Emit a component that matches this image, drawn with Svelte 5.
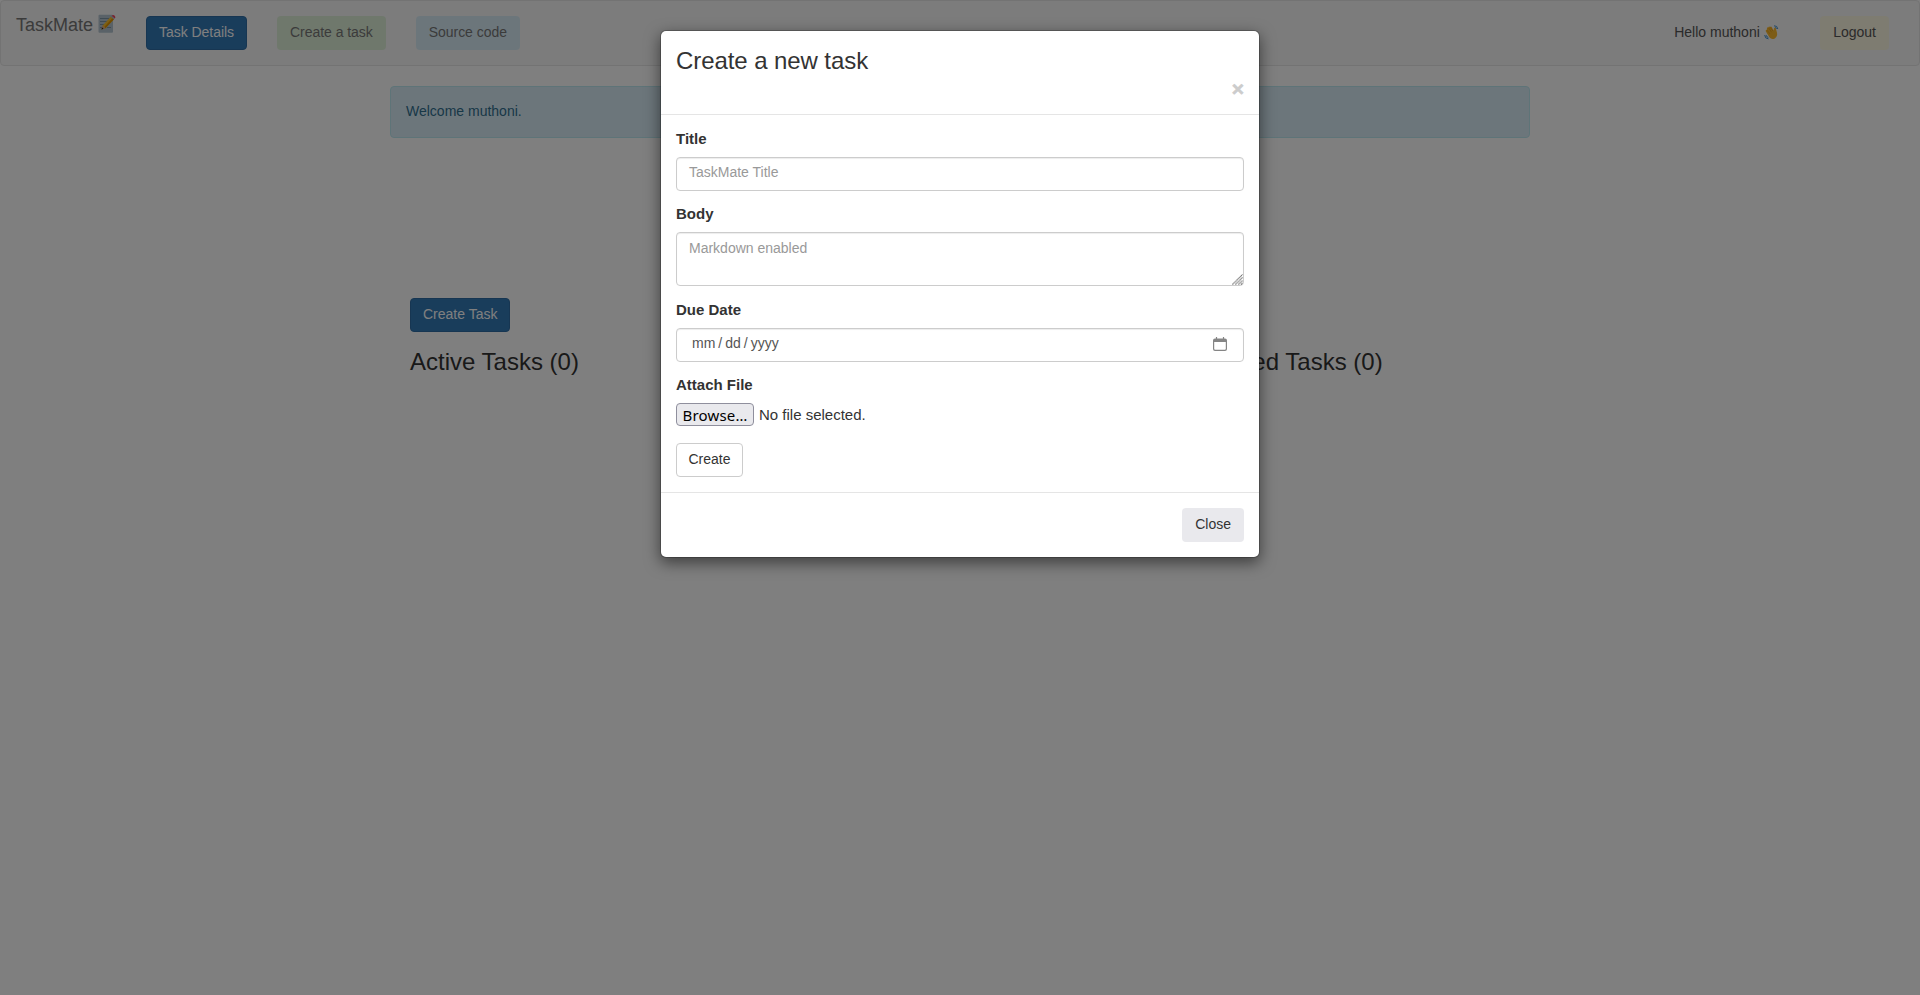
<script>
  const links = [
    { label: 'Task Details', kind: 'primary' },
    { label: 'Create a task', kind: 'success' },
    { label: 'Source code', kind: 'info' }
  ];
</script>

<div class="page">
  <nav>
    <span class="brand">
      TaskMate
      <svg width="19" height="19" viewBox="0 0 19 19">
        <rect x="0.500" y="0.800" width="14.500" height="18" rx="1" fill="#b4c5d0" />
        <path d="M2 4.500h9M2 7.500h8M2 10.500h6M2 13.500h4M9 13.500h4" stroke="#7f96a6" stroke-width="1" />
        <path d="M3.500 15.500l1.200-4L13 2.500l3 2.700-8.500 9z" fill="#fbc02d" />
        <path d="M6.500 12.800l8-8.700 1.500 1.100-8.500 9z" fill="#e59600" />
        <path d="M3.500 15.500l1.200-4 2.800 2.700z" fill="#e0a98a" />
        <path d="M3.500 15.500l.6-2 1.400 1.300z" fill="#222" />
        <path d="M12.700 2.800l1-1.100 3 2.700-1 1.100z" fill="#b0bec5" />
        <path d="M13.700 1.700q1.500-1.500 3 0t0 2.700z" fill="#f2475f" />
      </svg>
    </span>
    <div class="links">
      {#each links as link}
        <button class="btn nav-btn {link.kind}">{link.label}</button>
      {/each}
    </div>
    <span class="hello">
      Hello muthoni
      <svg width="15" height="15" viewBox="0 0 15 15">
        <path d="M1.800 6.200q-.4-1.300.9-1.200L3 3.200q.2-1.200 1.300-.7Q5 1 6 1.900q1.200-.8 1.700.2l1.800 3.300.6-2.200q.8-1.300 1.700 0l1.200 4.600q.8 3.800-2.200 5.600-3 1.500-5.300-.8z" fill="#fbb92c" />
        <path d="M3 5.200l3 3.700M4.600 2.900l3 4.400M6.400 2.500l2.500 3.600" stroke="#dc9218" stroke-width=".6" fill="none" />
        <path d="M10 .8q3.400-.3 3.800 3.200M11.300 2.500q1 .2 1.200 1.200M.7 10q.1 3.600 3.800 3.900M2.300 10.300q.2 1.900 2 2.100" stroke="#4291d0" stroke-width="1" fill="none" />
      </svg>
    </span>
    <button class="btn nav-btn warning">Logout</button>
  </nav>
  <div class="alert">Welcome muthoni.</div>
  <main>
    <section>
      <button class="btn primary create-task">Create Task</button>
      <h3>Active Tasks (0)</h3>
    </section>
    <section class="completed">
      <h3>Completed Tasks (0)</h3>
    </section>
  </main>
</div>

<div class="backdrop">
  <div class="modal">
    <header>
      <h3>Create a new task</h3>
      <button class="dismiss" aria-label="Dismiss">×</button>
    </header>
    <form>
      <span class="label">Title</span>
      <div class="field">TaskMate Title</div>
      <span class="label">Body</span>
      <div class="field area">
        Markdown enabled
        <svg class="grip" width="11" height="11" viewBox="0 0 11 11" stroke="#666" stroke-width="1.1" stroke-dasharray="1.1 .4">
          <path d="M.5 10.500l10-10M3.500 10.500l7-7M6.500 10.500l4-4M9 10.500l1.500-1.500" fill="none" />
        </svg>
      </div>
      <span class="label">Due Date</span>
      <div class="field date">
        <span class="parts"><span>mm</span><span>/</span><span>dd</span><span>/</span><span>yyyy</span></span>
        <svg width="14" height="14" viewBox="0 0 14 14">
          <path d="M2 1.500h10a2 2 0 0 1 2 2V12a2 2 0 0 1-2 2H2a2 2 0 0 1-2-2V3.500a2 2 0 0 1 2-2zM1.200 5v6.800q0 1 1 1h9.600q1 0 1-1V5z" fill="#858585" fill-rule="evenodd" />
          <path d="M3.500 0v3M10.500 0v3" stroke="#858585" stroke-width="1.200" />
        </svg>
      </div>
      <span class="label">Attach File</span>
      <div class="file"><span class="browse">Browse…</span><span>No file selected.</span></div>
      <button type="button" class="btn plain">Create</button>
    </form>
    <footer><button class="btn close">Close</button></footer>
  </div>
</div>

<style>
  :global(body) {
    margin: 0;
    background: #fff;
  }
  .page,
  .backdrop {
    box-sizing: border-box;
    width: 100%;
    height: 995px;
    overflow: hidden;
    font: 14px/20px 'Liberation Sans', Arial, sans-serif;
    color: #333;
  }
  .backdrop {
    position: absolute;
    inset: 0;
    padding-top: 30px;
    background: rgba(0, 0, 0, 0.5);
  }
  nav {
    box-sizing: border-box;
    display: flex;
    align-items: flex-start;
    height: 66px;
    padding: 15px 30px 0 15px;
    border: 1px solid #e7e7e7;
    border-radius: 4px;
    background: #f8f8f8;
  }
  .brand {
    display: flex;
    gap: 5px;
    width: 130px;
    margin-top: -1px;
    font-size: 18px;
    line-height: 20px;
    color: #777;
    white-space: nowrap;
  }
  .brand svg {
    margin-top: -1px;
  }
  .links {
    display: flex;
    gap: 30px;
    letter-spacing: -0.04px;
  }
  .hello {
    display: flex;
    gap: 4px;
    width: 146px;
    margin-left: auto;
    padding-top: 6px;
    color: #555;
    white-space: nowrap;
  }
  .hello svg {
    margin-top: 3px;
  }
  .btn {
    box-sizing: border-box;
    display: flex;
    align-items: center;
    height: 34px;
    padding: 0 12px 3px;
    border: 1px solid transparent;
    border-radius: 4px;
    font: inherit;
    letter-spacing: inherit;
    white-space: nowrap;
  }
  .nav-btn {
    padding-bottom: 2px;
  }
  .primary {
    background: #337ab7;
    border-color: #2e6da4;
    color: #fff;
  }
  .success {
    background: #dff0d8;
    color: #777;
  }
  .info {
    background: #d9edf7;
    color: #777;
  }
  .warning {
    background: #fcf8e3;
    color: #555;
  }
  .alert {
    box-sizing: border-box;
    width: 1140px;
    height: 52px;
    margin: 20px auto 0;
    padding: 14px 15px;
    border: 1px solid #bce8f1;
    border-radius: 4px;
    background: #d9edf7;
    color: #31708f;
  }
  main {
    display: grid;
    grid-template-columns: 753px auto;
    width: 1100px;
    margin: 160px auto 0;
  }
  h3 {
    margin: 0;
    font-size: 24px;
    font-weight: 400;
    line-height: 26px;
  }
  .create-task {
    margin-bottom: 17px;
  }
  .completed {
    padding-top: 51px;
  }
  .modal {
    box-sizing: border-box;
    width: 600px;
    height: 528px;
    margin: 0 auto;
    border: 1px solid rgba(0, 0, 0, 0.2);
    border-radius: 6px;
    background: #fff;
    background-clip: padding-box;
    box-shadow: 0 5px 15px rgba(0, 0, 0, 0.5);
  }
  header {
    box-sizing: border-box;
    height: 84px;
    padding: 17px 15px 0;
    border-bottom: 1px solid #e5e5e5;
  }
  header h3 {
    letter-spacing: -0.08px;
  }
  .dismiss {
    display: block;
    margin: 4px 0 0 auto;
    padding: 0;
    border: 0;
    background: none;
    font: bold 21px/21px 'Liberation Sans', sans-serif;
    color: #ccc;
    -webkit-text-stroke: 0.6px #ccc;
  }
  form {
    box-sizing: border-box;
    height: 377px;
    padding: 14px 15px 0;
  }
  .label {
    display: block;
    height: 21px;
    margin-bottom: 7px;
    font-size: 15px;
    font-weight: 700;
    line-height: 19px;
  }
  .field {
    box-sizing: border-box;
    display: flex;
    justify-content: space-between;
    height: 34px;
    margin-bottom: 13px;
    padding: 4px 12px;
    border: 1px solid #ccc;
    border-radius: 4px;
    box-shadow: inset 0 1px 1px rgba(0, 0, 0, 0.075);
    color: #999;
  }
  .area {
    position: relative;
    height: 54px;
    margin-bottom: 14px;
    padding-top: 5px;
  }
  .grip {
    position: absolute;
    right: 0;
    bottom: 0;
  }
  .date {
    padding: 4px 16px 0 15px;
    color: #555;
  }
  .date svg {
    margin-top: 4px;
  }
  .parts {
    display: flex;
    gap: 3px;
  }
  .file {
    display: flex;
    gap: 5px;
    height: 23px;
    margin: 0 0 17px;
    font-size: 15px;
    line-height: 24px;
  }
  .browse {
    box-sizing: border-box;
    width: 78px;
    height: 23px;
    border: 1px solid #8f8f9d;
    border-radius: 4px;
    background: #e9e9ed;
    font: 15px/22px 'Noto Sans', sans-serif;
    letter-spacing: 0.2px;
    text-align: center;
    color: #000;
  }
  .plain {
    padding: 0 11.5px 3px;
    background: #fff;
    border-color: #ccc;
    color: #333;
  }
  footer {
    display: flex;
    justify-content: flex-end;
    padding: 15px;
    border-top: 1px solid #e5e5e5;
  }
  .close {
    background: #e9e9ed;
    color: #333;
  }
</style>
